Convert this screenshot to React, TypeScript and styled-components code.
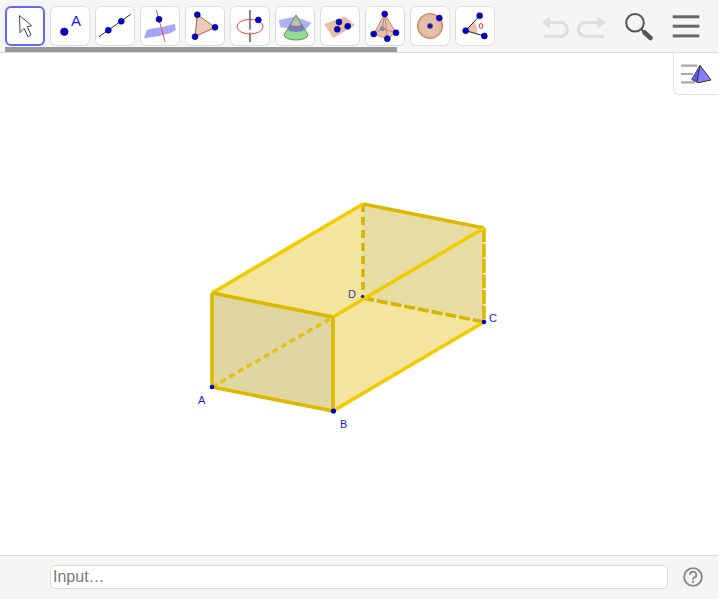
import React from "react";
import styled, { createGlobalStyle } from "styled-components";

const Global = createGlobalStyle`
  html, body { margin: 0; padding: 0; background: #fff; font-family: "Liberation Sans", Arial, sans-serif; }
`;

const Shell = styled.div`
  width: 718px;
  height: 599px;
  display: flex;
  flex-direction: column;
  overflow: hidden;
`;

const Toolbar = styled.header`
  display: flex;
  flex-direction: column;
  background: #f5f5f5;
  border-bottom: 1px solid #dcdcdc;
`;

const ToolRow = styled.div`
  height: 41px;
  padding-top: 6px;
  display: flex;
  justify-content: space-between;
`;

const ToolGroup = styled.div`
  display: flex;
  gap: 5px;
  padding-left: 5px;
`;

const ToolButton = styled.button<{ $active?: boolean }>`
  width: 40px;
  height: 40px;
  padding: 0;
  border: none;
  border-radius: 6px;
  background: #fff;
  box-shadow: inset 0 0 0 ${(p) => (p.$active ? "2px #6666ff" : "1px #dedede")};
  display: block;
`;

const ToolIcon = styled.svg`
  display: block;
  width: 40px;
  height: 40px;
`;

const ActionGroup = styled.div`
  display: flex;
  align-items: flex-start;
  padding-right: 16px;
`;

const ScrollThumb = styled.div`
  width: 392px;
  height: 5px;
  margin-left: 5px;
  background: #999;
`;

const Main = styled.main`
  position: relative;
  flex: 1;
  min-height: 0;
  background: #fff;
`;

const Canvas = styled.svg`
  display: block;
  width: 718px;
  height: 502px;
`;

const PointLabel = styled.text<{ $dim?: boolean }>`
  font-family: "Liberation Sans", Arial, sans-serif;
  font-size: 11px;
  fill: ${(p) => (p.$dim ? "#3c3ca8" : "#1a1ae6")};
`;

const StyleToggle = styled.div`
  position: absolute;
  top: 0;
  right: 0;
  width: 45px;
  height: 42px;
  box-sizing: border-box;
  background: #fff;
  border-left: 1px solid #e0e0e0;
  border-bottom: 1px solid #e0e0e0;
  border-bottom-left-radius: 6px;
`;

const InputBar = styled.footer`
  height: 43px;
  box-sizing: content-box;
  border-top: 1px solid #dcdcdc;
  background: #f5f5f5;
  display: flex;
  align-items: flex-start;
  padding: 0 0 0 50px;
`;

const AlgebraInput = styled.input`
  flex: 1;
  min-width: 0;
  height: 24px;
  margin-top: 9px;
  box-sizing: border-box;
  padding: 0 2px;
  border: 1px solid #dcdcdc;
  border-radius: 5px;
  background: #fff;
  outline: none;
  font-family: "Liberation Sans", Arial, sans-serif;
  font-size: 16px;
  &::placeholder { color: #7a7a7a; opacity: 1; }
`;

const HelpSlot = styled.div`
  width: 50px;
  padding-top: 11px;
  display: flex;
  justify-content: center;
`;

const BLUE = "#0000d8";
const Dot = ({ x, y, r = 3 }: { x: number; y: number; r?: number }) => (
  <circle cx={x} cy={y} r={r} fill={BLUE} stroke="#101040" strokeWidth={0.6} />
);

const tools: React.ReactNode[] = [
  <path d="M14.5 9.5 L15 26.7 L19 22.3 L23 30.7 L26 29 L22.3 20.7 L26.7 19.7 Z" fill="#fff" stroke="#444" strokeWidth={1} strokeLinejoin="round" />,
  <>
    <Dot x={14.3} y={25.7} r={3.8} />
    <text x={26} y={19.6} textAnchor="middle" fontFamily="Liberation Sans" fontSize={15} fill="#1a1aff">A</text>
  </>,
  <>
    <line x1={4} y1={30.7} x2={35.7} y2={8.3} stroke="#333" strokeWidth={1} />
    <Dot x={13.3} y={24.3} />
    <Dot x={26.3} y={15.3} />
  </>,
  <>
    <path d="M4 32.3 L6.7 24 Q12 22 20 21.5 L35 18 L35.7 24 L30 27.3 Q18 31 4 32.3 Z" fill="#a6a6f8" />
    <line x1={16.3} y1={4} x2={25} y2={35.7} stroke="#e85050" strokeWidth={1} />
    <Dot x={19} y={13.3} />
  </>,
  <>
    <path d="M12.3 8.7 L30 21.3 L10 30.7 Z" fill="#eccbbc" stroke="#a5603f" strokeWidth={1} />
    <Dot x={12.3} y={8.7} />
    <Dot x={30} y={21.3} />
    <Dot x={10} y={30.7} />
  </>,
  <>
    <line x1={20} y1={4} x2={20} y2={23} stroke="#888" strokeWidth={2.2} />
    <line x1={20} y1={23} x2={20} y2={28} stroke="#bbb" strokeWidth={2.2} strokeDasharray="1.5 1.5" />
    <line x1={20} y1={28} x2={20} y2={36} stroke="#888" strokeWidth={2.2} />
    <ellipse cx={20} cy={20.7} rx={13} ry={7.3} fill="none" stroke="#e24a4a" strokeWidth={1} />
    <Dot x={28.3} y={14} />
  </>,
  <>
    <path d="M4 14 L20 10.7 L36.7 16.7 L30 24 L5 21.3 Z" fill="#b0b0f6" />
    <path d="M21 9 L33 29 A12 5 0 0 1 9 29 Z" fill="#96d896" />
    <path d="M21 9 L28.6 21.5 Q21 24 13.4 21.5 Z" fill="#bcbfb4" />
    <path d="M14.6 19 Q21 23 27.5 19 L30 24 Q21 28 12 24 Z" fill="#6f84c4" />
    <path d="M15 19 Q21 22.5 27.4 19" fill="none" stroke="#e03c3c" strokeWidth={1} />
    <path d="M21 9 L33 29 A12 5 0 0 1 9 29 Z" fill="none" stroke="#3f9f4f" strokeWidth={1} />
  </>,
  <>
    <path d="M4 18 L25 10.7 L35 19 L13.3 32.3 Z" fill="#e6bda8" />
    <Dot x={19} y={16} />
    <Dot x={27.7} y={20.3} />
    <Dot x={17.3} y={23.3} />
  </>,
  <>
    <path d="M19.7 8 L8.7 28 L22.3 32.7 L31 26.7 Z" fill="#e6c2ae" stroke="#b0765a" strokeWidth={0.8} />
    <path d="M19.7 8 L22.3 32.7 M8.7 28 L17.3 22.7 L31 26.7 M19.7 8 L17.3 22.7" fill="none" stroke="#b0765a" strokeWidth={0.8} />
    <circle cx={17.3} cy={22.7} r={2.5} fill="#8a8aa8" />
    <Dot x={19.7} y={8} />
    <Dot x={8.7} y={28} />
    <Dot x={31} y={26.7} />
    <Dot x={22.3} y={32.7} />
  </>,
  <>
    <circle cx={20} cy={20} r={12.6} fill="url(#sphereFill)" stroke="#c98a6e" strokeWidth={1} />
    <circle cx={20} cy={20} r={2.6} fill="#1a1aa0" stroke="#556" strokeWidth={0.6} />
    <Dot x={29.3} y={12} />
  </>,
  <>
    <path d="M10.7 24.7 L18.5 16 A11.5 11.5 0 0 1 21.8 27.4 Z" fill="#ecc0aa" />
    <path d="M24.7 9.7 L10.7 24.7 L29.3 30" fill="none" stroke="#222" strokeWidth={1} />
    <ellipse cx={26} cy={20} rx={1.8} ry={2.4} fill="none" stroke="#e03030" strokeWidth={1} />
    <Dot x={24.7} y={9.7} />
    <Dot x={10.7} y={24.7} />
    <Dot x={29.3} y={30} />
  </>,
];

const A = [212, 387], B = [333, 411], C = [484, 322], D = [363, 298];
const E = [212, 293], F = [333, 317], G = [484, 228], H = [363, 204];
const pts = (...p: number[][]) => p.map((q) => q.join(",")).join(" ");

const Edge = ({ a, b, color = "#f0cb00", dash, w = 3.6 }: { a: number[]; b: number[]; color?: string; dash?: string; w?: number }) => (
  <line x1={a[0]} y1={a[1]} x2={b[0]} y2={b[1]} stroke={color} strokeWidth={w} strokeDasharray={dash} />
);

const DARK = "#dcb900";

export default function App() {
  return (
    <Shell>
      <Global />
      <Toolbar>
        <ToolRow>
          <ToolGroup>
            {tools.map((t, i) => (
              <ToolButton key={i} $active={i === 0}>
                <ToolIcon viewBox="0 0 40 40">
                  <defs>
                    <radialGradient id="sphereFill">
                      <stop offset="0%" stopColor="#e9c4b2" />
                      <stop offset="80%" stopColor="#e6bca6" />
                      <stop offset="100%" stopColor="#d2987c" />
                    </radialGradient>
                  </defs>
                  {t}
                </ToolIcon>
              </ToolButton>
            ))}
          </ToolGroup>
          <ActionGroup>
            <svg width="162" height="41" viewBox="540 6 162 41">
              <path d="M541.5 22.5 L550 16.5 V28.5 Z" fill="#dedede" />
              <path d="M548 22.5 H560.5 A6.9 6.9 0 0 1 560.5 36.3 H544" fill="none" stroke="#dedede" strokeWidth={3.2} />
              <path d="M606 22.5 L597.5 16.5 V28.5 Z" fill="#dedede" />
              <path d="M599 22.5 H585.5 A6.9 6.9 0 0 0 585.5 36.3 H604" fill="none" stroke="#dedede" strokeWidth={3.2} />
              <circle cx={635} cy={22.7} r={8.8} fill="none" stroke="#555" strokeWidth={2} />
              <line x1={641.5} y1={29.5} x2={644} y2={32} stroke="#555" strokeWidth={2} />
              <line x1={644.5} y1={32.5} x2={650.5} y2={38} stroke="#555" strokeWidth={4.6} strokeLinecap="round" />
              <rect x={672.7} y={15.3} width={26.6} height={3} fill="#666" />
              <rect x={672.7} y={24.7} width={26.6} height={3} fill="#666" />
              <rect x={672.7} y={34.4} width={26.6} height={3} fill="#666" />
            </svg>
          </ActionGroup>
        </ToolRow>
        <ScrollThumb />
      </Toolbar>
      <Main>
        <Canvas viewBox="0 53 718 502">
          <polygon points={pts(E, H, G, C, B, A)} fill="#f3e49e" />
          <polygon points={pts(H, G, C, D)} fill="#e6dca4" />
          <polygon points={pts(A, B, F, E)} fill="#dfd6a1" />
          <Edge a={A} b={F} color="#e2c21a" dash="6 4" />
          <Edge a={H} b={D} color="#d6b400" dash="8 5" />
          <Edge a={D} b={C} color="#d6b400" dash="11 3" />
          <Edge a={G} b={C} color={DARK} dash="14 1.5" />
          <Edge a={H} b={G} color={DARK} />
          <Edge a={E} b={H} />
          <Edge a={F} b={G} />
          <Edge a={B} b={C} />
          <Edge a={E} b={F} color={DARK} />
          <Edge a={E} b={A} color={DARK} />
          <Edge a={A} b={B} color={DARK} />
          <Edge a={B} b={F} color={DARK} />
          <circle cx={212} cy={387} r={2.3} fill={BLUE} />
          <circle cx={333.5} cy={411} r={2.6} fill={BLUE} />
          <circle cx={484} cy={322} r={2.3} fill={BLUE} />
          <circle cx={362.5} cy={296.5} r={1.8} fill="#3030a0" />
          <PointLabel x={198} y={404}>A</PointLabel>
          <PointLabel x={340} y={428}>B</PointLabel>
          <PointLabel x={489} y={322}>C</PointLabel>
          <PointLabel x={348} y={298} $dim>D</PointLabel>
        </Canvas>
        <StyleToggle>
          <svg width="44" height="41" viewBox="674 53 44 41">
            <path d="M681 65.7 H697 M681 74 H693 M681 82.3 H695" stroke="#aaa" strokeWidth={2.2} fill="none" />
            <path d="M700 65.5 L691.7 79.5 L698.3 82.7 L711 80 Z" fill="#8080ff" stroke="#333" strokeWidth={1} strokeLinejoin="round" />
            <path d="M700 65.5 L691.7 79.5 L697 82.5 Z" fill="#5c5cd8" />
            <path d="M700 65.5 L697 82.5" stroke="#333" strokeWidth={1} />
          </svg>
        </StyleToggle>
      </Main>
      <InputBar>
        <AlgebraInput placeholder="Input…" />
        <HelpSlot>
          <svg width="20" height="20" viewBox="0 0 20 20">
            <circle cx={10} cy={10} r={8.9} fill="none" stroke="#8a8a8a" strokeWidth={1.9} />
            <path d="M6.9 7.8 A3.2 3 0 1 1 11.6 10.4 Q10 11.2 10 12.6" fill="none" stroke="#8a8a8a" strokeWidth={1.9} />
            <rect x={9} y={13.8} width={2} height={2} fill="#8a8a8a" />
          </svg>
        </HelpSlot>
      </InputBar>
    </Shell>
  );
}
